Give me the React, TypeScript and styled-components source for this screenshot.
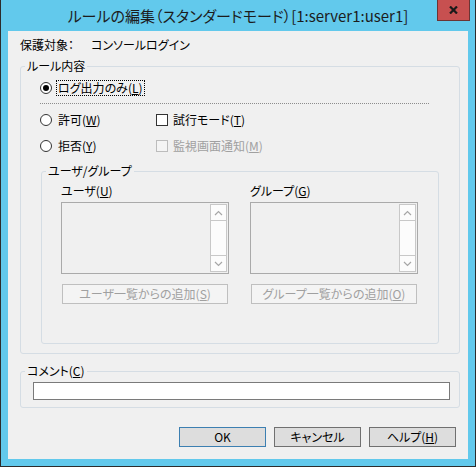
import React from "react";
import styled, { createGlobalStyle } from "styled-components";

const GlobalStyle = createGlobalStyle`
  html, body { margin: 0; padding: 0; background: #ffffff; }
  body {
    font-family: "Noto Sans CJK JP", "Noto Sans", sans-serif;
    font-size: 12px;
    color: #000;
    font-feature-settings: "palt";
  }
  * { box-sizing: border-box; }
`;

const Window = styled.div`
  width: 476px;
  height: 467px;
  background: #62c9ec;
  border: 1px solid #2c2c2c;
  border-top: none;
  padding: 0 7px 7px;
  display: flex;
  flex-direction: column;
`;

const TitleBar = styled.div`
  height: 31px;
  margin: 0 -7px;
  display: grid;
  grid-template-columns: 1fr auto 1fr;
  align-items: start;
`;

const Title = styled.div`
  grid-column: 2;
  padding-top: 5px;
  font-size: 15px;
  line-height: 21px;
  color: #1c1c1c;
  white-space: nowrap;
`;

const CloseButton = styled.div`
  grid-column: 3;
  justify-self: end;
  margin-right: 5px;
  width: 33px;
  height: 21px;
  background: #c75050;
  border: 1px solid #6b3434;
  border-top: none;
  display: flex;
  align-items: center;
  justify-content: center;
`;

const Client = styled.div`
  flex: 1;
  background: #f0f0f0;
  display: flex;
  flex-direction: column;
  padding: 6px 8px 12px 12px;
`;

const InfoRow = styled.div`
  display: flex;
  height: 16px;
  line-height: 16px;
  white-space: nowrap;
`;

const InfoLabel = styled.span`
  width: 71px;
`;

const Group = styled.fieldset<{ $mt?: number }>`
  margin: ${(p) => p.$mt ?? 0}px 0 0;
  padding: 0;
  border: 1px solid #d5dde4;
  border-radius: 3px;
  min-width: 0;
`;

const Legend = styled.legend`
  margin-left: 4px;
  padding: 0 2px;
  height: 14px;
  line-height: 14px;
  font-size: 12px;
  white-space: nowrap;
`;

const RuleBody = styled.div`
  padding: 7px 20px 9px 19px;
  display: flex;
  flex-direction: column;
`;

const OptionRow = styled.label`
  display: flex;
  align-items: center;
  height: 16px;
  white-space: nowrap;
`;

const Radio = styled.span<{ $checked?: boolean }>`
  flex: none;
  width: 12px;
  height: 12px;
  border-radius: 50%;
  border: 1px solid #333;
  background: #fff;
  display: inline-flex;
  align-items: center;
  justify-content: center;
  margin-right: 4px;
  &::after {
    content: "";
    width: 6px;
    height: 6px;
    border-radius: 50%;
    background: #000;
    display: ${(p) => (p.$checked ? "block" : "none")};
  }
`;

const Check = styled.span<{ $disabled?: boolean }>`
  flex: none;
  width: 12px;
  height: 12px;
  border: 1px solid ${(p) => (p.$disabled ? "#bcbcbc" : "#333")};
  background: ${(p) => (p.$disabled ? "#f4f4f4" : "#fff")};
  margin-right: 3px;
`;

const OptionText = styled.span<{ $disabled?: boolean; $focused?: boolean }>`
  line-height: 14px;
  padding: 0 1px;
  color: ${(p) => (p.$disabled ? "#a0a0a0" : "#000")};
  border: 1px ${(p) => (p.$focused ? "dotted #000" : "solid transparent")};
`;

const Separator = styled.div`
  margin-top: 7px;
  width: 389px;
  border-top: 1px dotted #8c8c8c;
`;

const OptionGrid = styled.div`
  margin-top: 8px;
  display: grid;
  grid-template-columns: 116px auto;
  row-gap: 10px;
`;

const InnerGroupWrap = styled.div`
  margin: 10px 0 0 1px;
`;

const UserGrid = styled.div`
  padding: 5px 20px 39px 19px;
  display: grid;
  grid-template-columns: 168px 168px;
  column-gap: 21px;
`;

const Column = styled.div`
  display: flex;
  flex-direction: column;
`;

const FieldLabel = styled.div`
  height: 16px;
  line-height: 16px;
  white-space: nowrap;
`;

const ListBox = styled.div`
  margin-top: 3px;
  height: 72px;
  border: 1px solid #aaaaaa;
  background: #f0f0f0;
  padding: 1px;
  display: flex;
  justify-content: flex-end;
`;

const ScrollBar = styled.div`
  width: 17px;
  display: flex;
  flex-direction: column;
  border: 1px solid #c8c8c8;
  background: #fcfcfc;
`;

const ScrollButton = styled.div<{ $edge: "top" | "bottom" }>`
  height: 16px;
  display: flex;
  align-items: center;
  justify-content: center;
  ${(p) => (p.$edge === "top" ? "border-bottom" : "border-top")}: 1px solid #c8c8c8;
`;

const ScrollTrack = styled.div`
  flex: 1;
`;

const DisabledButton = styled.div`
  margin: 10px 0 0 1px;
  width: 166px;
  height: 20px;
  border: 1px solid #bfbfbf;
  background: #f4f4f4;
  color: #a0a0a0;
  line-height: 18px;
  text-align: center;
  white-space: nowrap;
`;

const CommentBody = styled.div`
  padding: 4px 9px 7px 12px;
`;

const TextInput = styled.div`
  height: 18px;
  border: 1px solid #7a7a7a;
  background: #fff;
`;

const ButtonRow = styled.div`
  margin-top: 19px;
  margin-right: 4px;
  display: flex;
  justify-content: flex-end;
  gap: 8px;
`;

const DialogButton = styled.div<{ $default?: boolean }>`
  width: 87px;
  height: 20px;
  border: 1px solid ${(p) => (p.$default ? "#3c7fb1" : "#707070")};
  background: #dddddd;
  line-height: 18px;
  text-align: center;
  white-space: nowrap;
`;

const Chevron = ({ up }: { up?: boolean }) => (
  <svg width="9" height="6" viewBox="0 0 9 6">
    <polyline
      points={up ? "1,5 4.5,1.5 8,5" : "1,1 4.5,4.5 8,1"}
      fill="none"
      stroke="#a6a6a6"
      strokeWidth="1.2"
    />
  </svg>
);

const List = () => (
  <ListBox>
    <ScrollBar>
      <ScrollButton $edge="top">
        <Chevron up />
      </ScrollButton>
      <ScrollTrack />
      <ScrollButton $edge="bottom">
        <Chevron />
      </ScrollButton>
    </ScrollBar>
  </ListBox>
);

export default function App() {
  return (
    <>
      <GlobalStyle />
      <Window>
        <TitleBar>
          <Title>ルールの編集（スタンダードモード）[1:server1:user1]</Title>
          <CloseButton>
            <svg width="9" height="8" viewBox="0 0 9 8">
              <path d="M1 0.5 L8 7.5 M8 0.5 L1 7.5" stroke="#1a1a1a" strokeWidth="2.2" />
            </svg>
          </CloseButton>
        </TitleBar>
        <Client>
          <InfoRow>
            <InfoLabel>保護対象：</InfoLabel>
            <span>コンソールログイン</span>
          </InfoRow>

          <Group $mt={6}>
            <Legend>ルール内容</Legend>
            <RuleBody>
              <OptionRow>
                <Radio $checked />
                <OptionText $focused>
                  ログ出力のみ(<u>L</u>)
                </OptionText>
              </OptionRow>
              <Separator />
              <OptionGrid>
                <OptionRow>
                  <Radio />
                  <OptionText>
                    許可(<u>W</u>)
                  </OptionText>
                </OptionRow>
                <OptionRow>
                  <Check />
                  <OptionText>
                    試行モード(<u>T</u>)
                  </OptionText>
                </OptionRow>
                <OptionRow>
                  <Radio />
                  <OptionText>
                    拒否(<u>Y</u>)
                  </OptionText>
                </OptionRow>
                <OptionRow>
                  <Check $disabled />
                  <OptionText $disabled>
                    監視画面通知(<u>M</u>)
                  </OptionText>
                </OptionRow>
              </OptionGrid>
              <InnerGroupWrap>
                <Group>
                  <Legend>ユーザ/グループ</Legend>
                  <UserGrid>
                    <Column>
                      <FieldLabel>
                        ユーザ(<u>U</u>)
                      </FieldLabel>
                      <List />
                      <DisabledButton>
                        ユーザ一覧からの追加(<u>S</u>)
                      </DisabledButton>
                    </Column>
                    <Column>
                      <FieldLabel>
                        グループ(<u>G</u>)
                      </FieldLabel>
                      <List />
                      <DisabledButton>
                        グループ一覧からの追加(<u>O</u>)
                      </DisabledButton>
                    </Column>
                  </UserGrid>
                </Group>
              </InnerGroupWrap>
            </RuleBody>
          </Group>

          <Group $mt={10}>
            <Legend>
              コメント(<u>C</u>)
            </Legend>
            <CommentBody>
              <TextInput />
            </CommentBody>
          </Group>

          <ButtonRow>
            <DialogButton $default>OK</DialogButton>
            <DialogButton>キャンセル</DialogButton>
            <DialogButton>
              ヘルプ(<u>H</u>)
            </DialogButton>
          </ButtonRow>
        </Client>
      </Window>
    </>
  );
}
